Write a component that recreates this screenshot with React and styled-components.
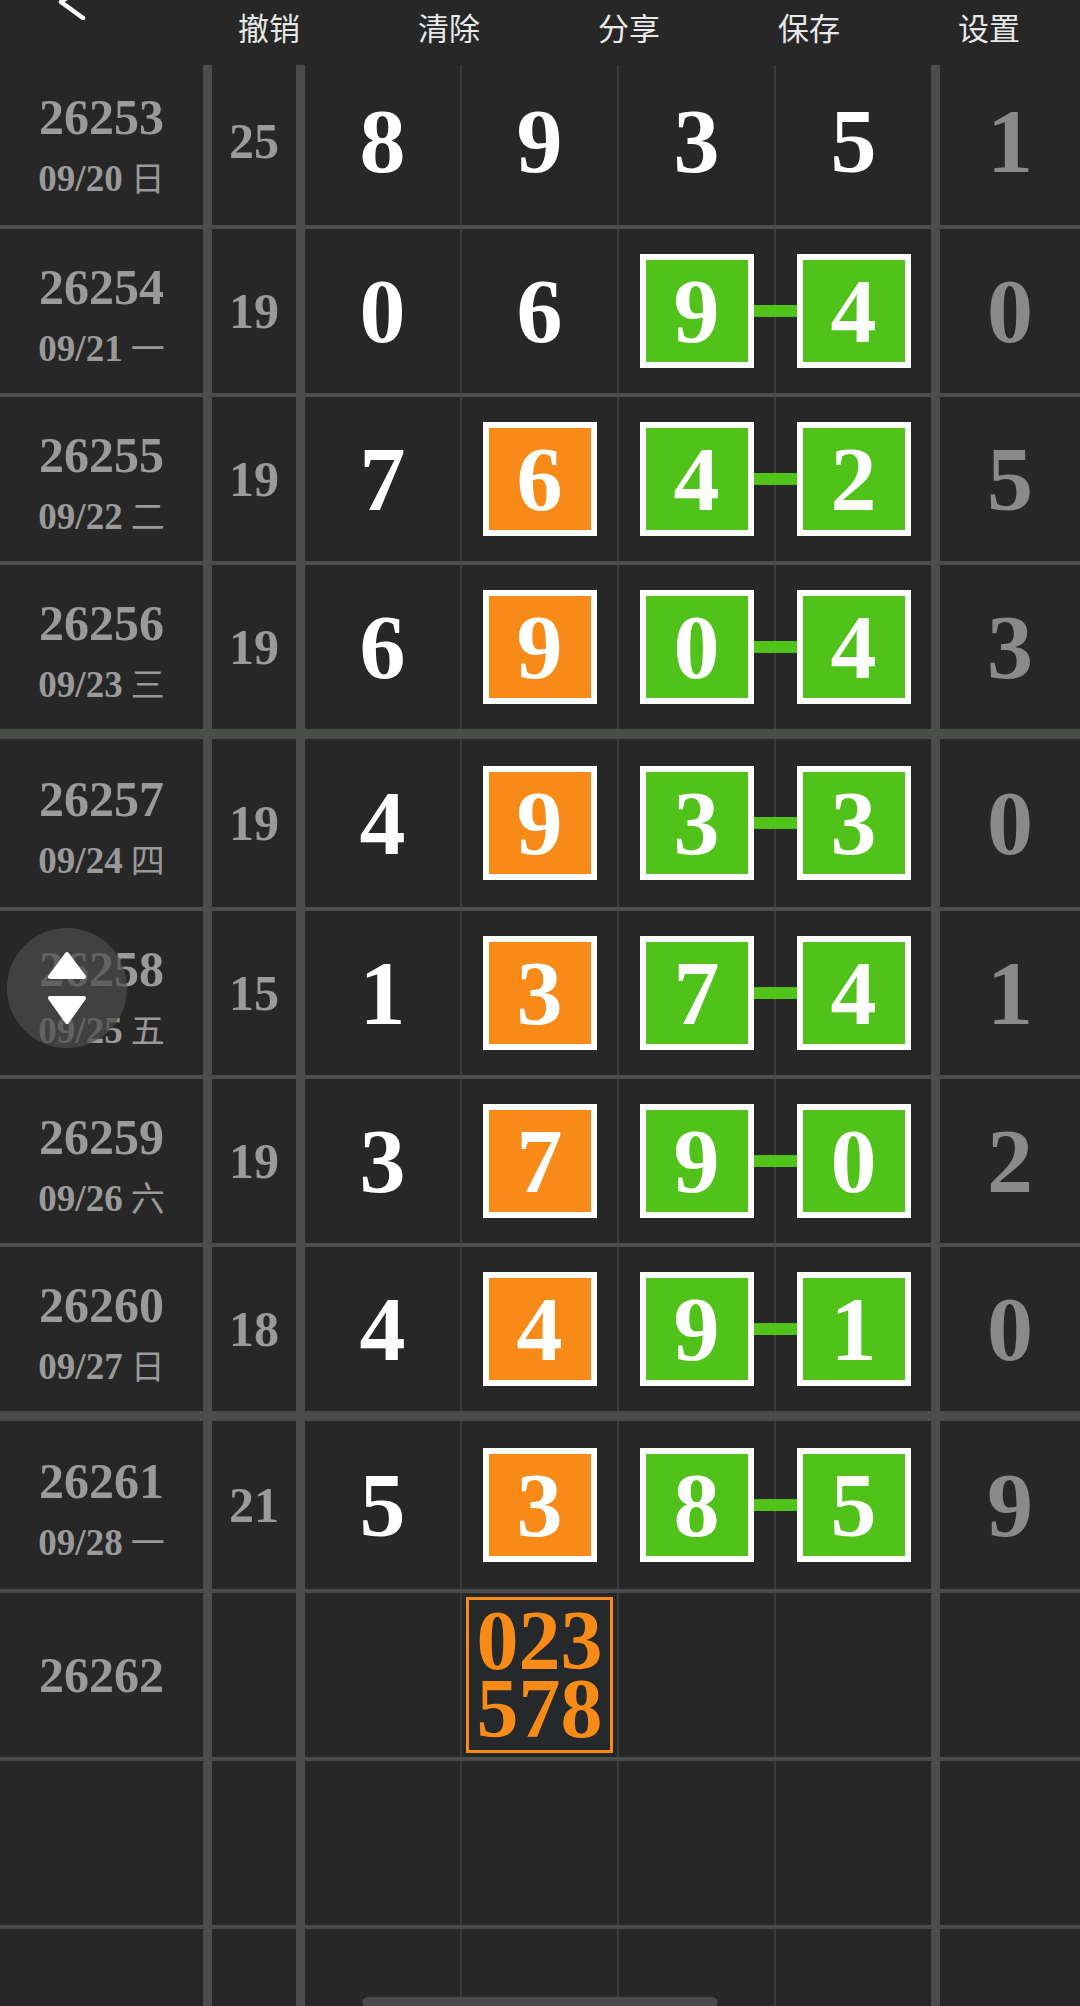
import React from "react";
import styled, { createGlobalStyle } from "styled-components";

const GlobalStyle = createGlobalStyle`
  html, body {
    margin: 0;
    padding: 0;
    background: #272727;
  }
  body {
    font-family: "Liberation Serif", "Noto Sans CJK SC", serif;
  }
  * {
    box-sizing: border-box;
  }
`;

const LINE = "#4b4d4b";
const THIN = "#3a3b3a";
const GREEN = "#50c21a";
const ORANGE = "#f88b17";

const Screen = styled.div`
  position: relative;
  width: 1080px;
  height: 2006px;
  overflow: hidden;
  background: #272727;
  display: flex;
  flex-direction: column;
`;

const Toolbar = styled.header`
  display: flex;
  height: 65px;
  flex-shrink: 0;
  background: #272727;
`;

const BackSlot = styled.div`
  width: 179px;
  padding-left: 56px;
  display: flex;
  align-items: flex-start;
`;

const ToolButton = styled.button`
  width: 180px;
  align-self: flex-start;
  padding: 11px 0 0;
  margin: 0;
  border: none;
  background: none;
  color: #e8e8e8;
  font-family: "Noto Sans CJK SC", sans-serif;
  font-size: 31px;
  line-height: 1;
  text-align: center;
`;

const Viewport = styled.div`
  flex: 1;
  overflow: hidden;
`;

const Sheet = styled.div`
  margin-top: -18px;
`;

const Row = styled.div`
  display: grid;
  grid-template-columns: 212px 93px 157px 157px 157px 164px 140px;
  height: ${(p) => (p.$group ? 178 : 168)}px;
  border-top: ${(p) => (p.$group ? 10 : 4)}px solid ${LINE};
`;

const Cell = styled.div`
  position: relative;
  display: flex;
  align-items: center;
  justify-content: center;
  border-right: ${(p) =>
    p.$rule === "thick"
      ? `9px solid ${LINE}`
      : p.$rule === "thin"
      ? `2px solid ${THIN}`
      : "none"};
`;

const IssueCell = styled(Cell)`
  flex-direction: column;
  padding-top: ${(p) => (p.$withDate ? 14 : 0)}px;
`;

const Issue = styled.div`
  font-size: 50px;
  line-height: 60px;
  font-weight: 700;
  color: #9a9a9a;
`;

const DateLine = styled.div`
  font-size: 37px;
  line-height: 60px;
  font-weight: 700;
  color: #9a9a9a;
  white-space: nowrap;
`;

const Weekday = styled.span`
  font-family: "Noto Sans CJK SC", sans-serif;
  font-weight: 400;
  font-size: 34px;
  margin-left: 8px;
`;

const Sum = styled.span`
  font-size: 50px;
  line-height: 1;
  font-weight: 700;
  color: #9a9a9a;
`;

const Digit = styled.span`
  font-size: 92px;
  line-height: 1;
  font-weight: 700;
  color: ${(p) => (p.$muted ? "#8a8a8a" : "#ffffff")};
`;

const Pick = styled.div`
  position: relative;
  width: 114px;
  height: 114px;
  border: 6px solid #ffffff;
  background: ${(p) => (p.$tone === "orange" ? ORANGE : GREEN)};
  display: flex;
  align-items: center;
  justify-content: center;
  color: #ffffff;
  font-size: 92px;
  line-height: 1;
  font-weight: 700;

  ${(p) =>
    p.$linked &&
    `
    &::after {
      content: "";
      position: absolute;
      left: calc(100% + 6px);
      top: 50%;
      width: 43px;
      height: 12px;
      margin-top: -6px;
      background: ${GREEN};
    }
  `}
`;

const Forecast = styled.div`
  width: 147px;
  height: 156px;
  border: 3px solid ${ORANGE};
  background: #25292b;
  display: flex;
  flex-direction: column;
  align-items: center;
  justify-content: center;
`;

const ForecastLine = styled.div`
  height: 68px;
  display: flex;
  align-items: center;
  justify-content: center;
  overflow: visible;
  color: ${ORANGE};
  font-size: 84px;
  line-height: 68px;
  font-weight: 700;
`;

const ScrollKnob = styled.div`
  position: absolute;
  left: 7px;
  top: 928px;
  width: 120px;
  height: 120px;
  border-radius: 50%;
  background: rgba(76, 76, 76, 0.72);
  display: flex;
  align-items: center;
  justify-content: center;
`;

const HomeBar = styled.div`
  position: absolute;
  left: 50%;
  bottom: -2px;
  width: 355px;
  height: 11px;
  transform: translateX(-50%);
  border-radius: 6px;
  background: #4a4a4a;
`;

const rows = [
  { issue: "26253", date: "09/20", week: "日", sum: 25, digits: [8, 9, 3, 5], tail: 1, group: true },
  { issue: "26254", date: "09/21", week: "一", sum: 19, digits: [0, 6, 9, 4], tail: 0, green: true },
  { issue: "26255", date: "09/22", week: "二", sum: 19, digits: [7, 6, 4, 2], tail: 5, orange: true, green: true },
  { issue: "26256", date: "09/23", week: "三", sum: 19, digits: [6, 9, 0, 4], tail: 3, orange: true, green: true },
  { issue: "26257", date: "09/24", week: "四", sum: 19, digits: [4, 9, 3, 3], tail: 0, orange: true, green: true, group: true },
  { issue: "26258", date: "09/25", week: "五", sum: 15, digits: [1, 3, 7, 4], tail: 1, orange: true, green: true },
  { issue: "26259", date: "09/26", week: "六", sum: 19, digits: [3, 7, 9, 0], tail: 2, orange: true, green: true },
  { issue: "26260", date: "09/27", week: "日", sum: 18, digits: [4, 4, 9, 1], tail: 0, orange: true, green: true },
  { issue: "26261", date: "09/28", week: "一", sum: 21, digits: [5, 3, 8, 5], tail: 9, orange: true, green: true, group: true },
];

const tools = ["撤销", "清除", "分享", "保存", "设置"];

function BackIcon() {
  return (
    <svg width="32" height="20" viewBox="0 0 32 20" style={{ overflow: "hidden" }}>
      <path
        d="M27 -14 L5 2 L27 18"
        fill="none"
        stroke="#ffffff"
        strokeWidth="4.5"
        strokeLinecap="round"
        strokeLinejoin="round"
      />
    </svg>
  );
}

function UpDownIcon() {
  return (
    <svg width="40" height="75" viewBox="0 0 40 75">
      <path d="M20 3 L37 26 L3 26 Z" fill="#fff" stroke="#fff" strokeWidth="4" strokeLinejoin="round" />
      <path d="M3 47 L37 47 L20 71 Z" fill="#fff" stroke="#fff" strokeWidth="4" strokeLinejoin="round" />
    </svg>
  );
}

function DrawRow({ row }) {
  const [a, b, c, d] = row.digits;
  return (
    <Row $group={row.group}>
      <IssueCell $rule="thick" $withDate>
        <Issue>{row.issue}</Issue>
        <DateLine>
          {row.date}
          <Weekday>{row.week}</Weekday>
        </DateLine>
      </IssueCell>
      <Cell $rule="thick">
        <Sum>{row.sum}</Sum>
      </Cell>
      <Cell $rule="thin">
        <Digit>{a}</Digit>
      </Cell>
      <Cell $rule="thin">
        {row.orange ? <Pick $tone="orange">{b}</Pick> : <Digit>{b}</Digit>}
      </Cell>
      <Cell $rule="thin">
        {row.green ? <Pick $linked>{c}</Pick> : <Digit>{c}</Digit>}
      </Cell>
      <Cell $rule="thick">
        {row.green ? <Pick>{d}</Pick> : <Digit>{d}</Digit>}
      </Cell>
      <Cell>
        <Digit $muted>{row.tail}</Digit>
      </Cell>
    </Row>
  );
}

function BlankRow({ issue, children }) {
  return (
    <Row>
      <IssueCell $rule="thick">{issue && <Issue>{issue}</Issue>}</IssueCell>
      <Cell $rule="thick" />
      <Cell $rule="thin" />
      <Cell $rule="thin">{children}</Cell>
      <Cell $rule="thin" />
      <Cell $rule="thick" />
      <Cell />
    </Row>
  );
}

export default function App() {
  return (
    <>
      <GlobalStyle />
      <Screen>
        <Toolbar>
          <BackSlot>
            <BackIcon />
          </BackSlot>
          {tools.map((t) => (
            <ToolButton key={t}>{t}</ToolButton>
          ))}
        </Toolbar>
        <Viewport>
          <Sheet>
            {rows.map((r) => (
              <DrawRow key={r.issue} row={r} />
            ))}
            <BlankRow issue="26262">
              <Forecast>
                <ForecastLine>023</ForecastLine>
                <ForecastLine>578</ForecastLine>
              </Forecast>
            </BlankRow>
            <BlankRow />
            <BlankRow />
          </Sheet>
        </Viewport>
        <ScrollKnob>
          <UpDownIcon />
        </ScrollKnob>
        <HomeBar />
      </Screen>
    </>
  );
}
